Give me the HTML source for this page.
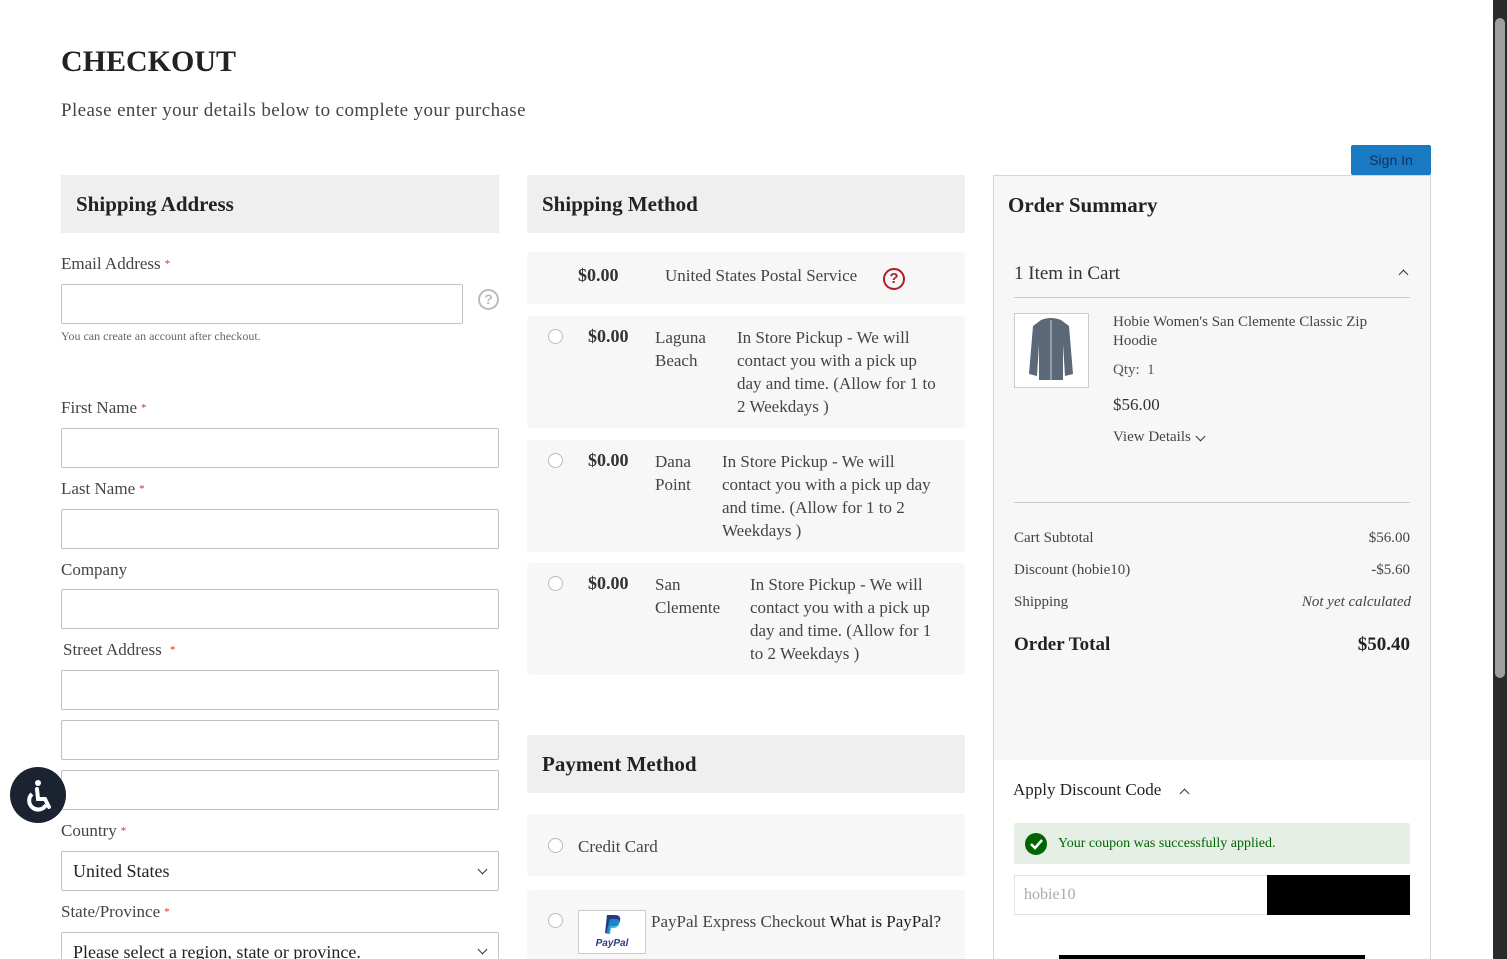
<!DOCTYPE html>
<html><head><meta charset="utf-8"><style>
*{box-sizing:border-box;margin:0;padding:0}
html,body{width:1507px;height:959px;overflow:hidden}
body{background:#fff;font-family:"Liberation Serif",serif;color:#333;position:relative}
.a{position:absolute}
.h{background:#efefef;font-weight:bold;font-size:21px;color:#222;padding-left:15px;line-height:58px}
.lbl{font-size:17px;color:#444}
.req{color:#e02b27;font-size:11px;margin-left:4px;vertical-align:2px}
.in{border:1px solid #c2c2c2;border-radius:2px;height:40px;background:#fff}
.box{background:#f7f7f7;border-radius:3px}
.radio{width:15px;height:15px;border:1px solid #bbb;border-radius:50%;background:#fff}
.t{font-size:17px;color:#444;line-height:23px}
.b{font-weight:bold;font-size:18px;color:#333}
.chev{position:absolute;width:8px;height:8px;border-right:1.5px solid #333;border-bottom:1.5px solid #333;transform:rotate(45deg)}
</style></head><body>
<div class="a" style="left:61px;top:45px;font-size:30px;font-weight:bold;color:#222">CHECKOUT</div>
<div class="a" style="left:61px;top:100px;font-size:19px;color:#444;letter-spacing:0.4px">Please enter your details below to complete your purchase</div>

<!-- left -->
<div class="a h" style="left:61px;top:175px;width:438px;height:58px">Shipping Address</div>
<div class="a lbl" style="left:61px;top:254px">Email Address<span class="req">*</span></div>
<div class="a in" style="left:61px;top:284px;width:402px"></div>
<div class="a" style="left:478px;top:289px;width:21px;height:21px;border:2px solid #bbb;border-radius:50%;color:#bbb;font:bold 14px 'Liberation Sans';text-align:center;line-height:17px">?</div>
<div class="a" style="left:61px;top:329px;font-size:12px;color:#666">You can create an account after checkout.</div>
<div class="a lbl" style="left:61px;top:398px">First Name<span class="req">*</span></div>
<div class="a in" style="left:61px;top:428px;width:438px"></div>
<div class="a lbl" style="left:61px;top:479px">Last Name<span class="req">*</span></div>
<div class="a in" style="left:61px;top:509px;width:438px"></div>
<div class="a lbl" style="left:61px;top:560px">Company</div>
<div class="a in" style="left:61px;top:589px;width:438px"></div>
<div class="a lbl" style="left:63px;top:640px">Street Address <span class="req">*</span></div>
<div class="a in" style="left:61px;top:670px;width:438px"></div>
<div class="a in" style="left:61px;top:720px;width:438px"></div>
<div class="a in" style="left:61px;top:770px;width:438px"></div>
<div class="a lbl" style="left:61px;top:821px">Country<span class="req">*</span></div>
<div class="a in" style="left:61px;top:851px;width:438px;font-size:18px;color:#222;padding:9px 11px">United States</div>
<div class="chev" style="left:479px;top:866px;width:7px;height:7px;border-width:1px"></div>
<div class="a lbl" style="left:61px;top:902px">State/Province<span class="req">*</span></div>
<div class="a in" style="left:61px;top:932px;width:438px;font-size:18px;color:#222;padding:9px 11px">Please select a region, state or province.</div>
<div class="chev" style="left:479px;top:946px;width:7px;height:7px;border-width:1px"></div>
<div class="a" style="left:10px;top:767px;width:56px;height:56px;border-radius:50%;background:#1b2230">
<svg width="56" height="56" viewBox="0 0 56 56"><circle cx="28" cy="16" r="3" fill="#fff"/><path d="M27 22 L28 32 L35 32 L39 40" stroke="#fff" stroke-width="4" fill="none" stroke-linecap="round"/><path d="M22 27 A9 9 0 1 0 36 38" stroke="#fff" stroke-width="4" fill="none"/></svg></div>

<!-- middle -->
<div class="a h" style="left:527px;top:175px;width:438px;height:58px">Shipping Method</div>
<div class="a box" style="left:527px;top:252px;width:438px;height:52px"></div>
<div class="a b" style="left:578px;top:265px">$0.00</div>
<div class="a t" style="left:665px;top:264px">United States Postal Service</div>
<div class="a" style="left:883px;top:268px;width:22px;height:22px;border:2px solid #b01b2a;border-radius:50%;color:#b01b2a;font:bold 15px 'Liberation Sans';text-align:center;line-height:18px">?</div>

<div class="a box" style="left:527px;top:316px;width:438px;height:112px"></div>
<div class="a radio" style="left:548px;top:329px"></div>
<div class="a b" style="left:588px;top:326px">$0.00</div>
<div class="a t" style="left:655px;top:326px;width:75px">Laguna Beach</div>
<div class="a t" style="left:737px;top:326px;width:200px">In Store Pickup - We will contact you with a pick up day and time. (Allow for 1 to 2 Weekdays )</div>

<div class="a box" style="left:527px;top:440px;width:438px;height:112px"></div>
<div class="a radio" style="left:548px;top:453px"></div>
<div class="a b" style="left:588px;top:450px">$0.00</div>
<div class="a t" style="left:655px;top:450px;width:60px">Dana Point</div>
<div class="a t" style="left:722px;top:450px;width:215px">In Store Pickup - We will contact you with a pick up day and time. (Allow for 1 to 2 Weekdays )</div>

<div class="a box" style="left:527px;top:563px;width:438px;height:112px"></div>
<div class="a radio" style="left:548px;top:576px"></div>
<div class="a b" style="left:588px;top:573px">$0.00</div>
<div class="a t" style="left:655px;top:573px;width:90px">San Clemente</div>
<div class="a t" style="left:750px;top:573px;width:182px">In Store Pickup - We will contact you with a pick up day and time. (Allow for 1 to 2 Weekdays )</div>

<div class="a h" style="left:527px;top:735px;width:438px;height:58px">Payment Method</div>
<div class="a box" style="left:527px;top:814px;width:438px;height:62px"></div>
<div class="a radio" style="left:548px;top:838px"></div>
<div class="a t" style="left:578px;top:835px">Credit Card</div>
<div class="a box" style="left:527px;top:890px;width:438px;height:69px"></div>
<div class="a radio" style="left:548px;top:913px"></div>
<div class="a" style="left:578px;top:910px;width:68px;height:44px;border:1px solid #ccc;background:#fff;text-align:center">
<svg width="24" height="22" viewBox="0 0 24 22" style="margin-top:3px"><path d="M7 1h8c4 0 6 2 5 6-1 4-4 5-7 5h-3l-1 7H5z" fill="#253b80"/><path d="M10 5h6c3 0 4 2 3 5-1 3-3 4-6 4h-2l-1 6H6z" fill="#179bd7" opacity=".8"/></svg>
<div style="font:italic bold 10px 'Liberation Sans';color:#253b80;margin-top:-3px">PayPal</div></div>
<div class="a t" style="left:651px;top:910px">PayPal Express Checkout <span style="color:#222">What is PayPal?</span></div>

<!-- right -->
<div class="a" style="left:1351px;top:145px;width:80px;height:30px;background:#1979c3;border-radius:2px;color:#10335a;font:14px 'Liberation Sans';text-align:center;line-height:30px">Sign In</div>
<div class="a" style="left:993px;top:175px;width:438px;height:800px;border:1px solid #d6d6d6;background:#fff"></div>
<div class="a" style="left:994px;top:176px;width:436px;height:584px;background:#f7f7f7"></div>
<div class="a" style="left:1008px;top:193px;font-size:21px;font-weight:bold;color:#222">Order Summary</div>
<div class="a" style="left:1014px;top:263px;font-size:19px;color:#333">1 Item in Cart</div>
<div class="chev" style="left:1400px;top:271px;transform:rotate(-135deg);width:7px;height:7px"></div>
<div class="a" style="left:1014px;top:297px;width:396px;height:1px;background:#ccc"></div>
<div class="a" style="left:1014px;top:313px;width:75px;height:75px;border:1px solid #ccc;background:#fff">
<svg width="73" height="73" viewBox="0 0 73 73"><path d="M26 6 Q36 2 46 6 L54 12 L58 60 L50 62 L48 30 L48 66 L24 66 L24 30 L22 62 L14 60 L18 12Z" fill="#5a6878"/><path d="M36 6 V66" stroke="#ccd" stroke-width="1"/></svg></div>
<div class="a" style="left:1113px;top:313px;width:280px;font-size:15px;line-height:19px;color:#444">Hobie Women's San Clemente Classic Zip Hoodie</div>
<div class="a" style="left:1113px;top:362px;font-size:15px;color:#555">Qty:&nbsp;&nbsp;1</div>
<div class="a" style="left:1113px;top:395px;font-size:17px;color:#333">$56.00</div>
<div class="a" style="left:1113px;top:429px;font-size:15px;color:#444">View Details</div>
<div class="chev" style="left:1197px;top:433px;width:7px;height:7px;border-width:1px"></div>
<div class="a" style="left:1014px;top:502px;width:396px;height:1px;background:#ccc"></div>
<div class="a" style="left:1014px;top:530px;font-size:15px;color:#444">Cart Subtotal</div>
<div class="a" style="right:97px;top:530px;font-size:15px;color:#444">$56.00</div>
<div class="a" style="left:1014px;top:562px;font-size:15px;color:#444">Discount (hobie10)</div>
<div class="a" style="right:97px;top:562px;font-size:15px;color:#444">-$5.60</div>
<div class="a" style="left:1014px;top:594px;font-size:15px;color:#444">Shipping</div>
<div class="a" style="right:96px;top:594px;font-size:15px;font-style:italic;color:#444">Not yet calculated</div>
<div class="a" style="left:1014px;top:634px;font-size:19px;font-weight:bold;color:#222">Order Total</div>
<div class="a" style="right:97px;top:634px;font-size:19px;font-weight:bold;color:#222">$50.40</div>
<div class="a" style="left:1013px;top:780px;font-size:17px;color:#222">Apply Discount Code</div>
<div class="chev" style="left:1181px;top:790px;transform:rotate(-135deg);width:7px;height:7px"></div>
<div class="a" style="left:1014px;top:823px;width:396px;height:41px;background:#e5efe5;border-radius:2px"></div>
<div class="a" style="left:1025px;top:833px;width:22px;height:22px;border-radius:50%;background:#006400"><svg width="22" height="22"><path d="M6 11l4 4 7-8" stroke="#fff" stroke-width="2.5" fill="none"/></svg></div>
<div class="a" style="left:1058px;top:836px;font-size:14px;color:#006400">Your coupon was successfully applied.</div>
<div class="a" style="left:1014px;top:875px;width:254px;height:40px;border:1px solid #e3e3e3;background:#fff;font-size:16px;color:#aaa;padding:10px 9px">hobie10</div>
<div class="a" style="left:1267px;top:875px;width:143px;height:40px;background:#000"></div>
<div class="a" style="left:1059px;top:955px;width:306px;height:4px;background:#000"></div>

<!-- scrollbar -->
<div class="a" style="left:1493px;top:0;width:14px;height:959px;background:#2b2b2b"></div>
<div class="a" style="left:1495px;top:18px;width:10px;height:660px;background:#9f9f9f;border-radius:5px"></div>
</body></html>
